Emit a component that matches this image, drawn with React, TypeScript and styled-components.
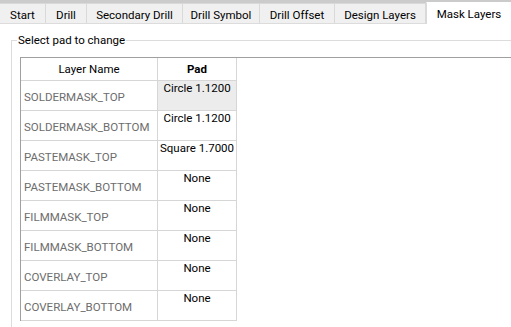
import React from "react";
import styled, { createGlobalStyle } from "styled-components";

const GlobalStyle = createGlobalStyle`
  html, body { margin: 0; padding: 0; background: #ffffff; }
  body {
    font-family: Roboto, "Noto Sans", sans-serif;
    font-size: 11.5px;
    color: #000000;
  }
`;

const Window = styled.div`
  width: 511px;
  height: 327px;
  overflow: hidden;
  background: #ffffff;
  display: flex;
  flex-direction: column;
`;

const TabStrip = styled.div`
  display: flex;
  align-items: flex-end;
  box-sizing: border-box;
  height: 24px;
  padding-top: 2px;
  background: #cbcbcb;
  flex-shrink: 0;
`;

const Tab = styled.div<{ $w: number; $active?: boolean }>`
  box-sizing: border-box;
  flex-shrink: 0;
  width: ${(p) => p.$w}px;
  height: ${(p) => (p.$active ? 22 : 21)}px;
  display: flex;
  align-items: center;
  justify-content: center;
  padding-top: ${(p) => (p.$active ? 1 : 3)}px;
  line-height: 16px;
  white-space: nowrap;
  background: ${(p) => (p.$active ? "#ffffff" : "#f0f0f0")};
  border-top: 1px solid ${(p) => (p.$active ? "#ffffff" : "#d9d9d9")};
  border-bottom: ${(p) => (p.$active ? "none" : "1px solid #dcdcdc")};
  border-left: ${(p) => (p.$active ? "1px solid #d9d9d9" : "none")};
  border-right: ${(p) => (p.$active ? "none" : "1px solid #d9d9d9")};
  flex-grow: ${(p) => (p.$active ? 1 : 0)};
`;

const Body = styled.div`
  flex: 1;
  display: flex;
  padding: 8px 0 0 11px;
`;

const Group = styled.fieldset`
  box-sizing: border-box;
  margin: 0;
  padding: 0 0 0 8px;
  width: 560px;
  min-height: 340px;
  border: 1px solid #dcdcdc;
  flex-shrink: 0;
  display: flex;
  flex-direction: column;
`;

const Legend = styled.legend`
  margin-left: -3px;
  padding: 0 1px;
  line-height: 16px;
  color: #000000;
`;

const GridFrame = styled.div`
  margin-top: 9px;
  flex: 1;
  border-top: 1px solid #a0a0a0;
  border-left: 1px solid #a0a0a0;
`;

const Grid = styled.div`
  display: grid;
  grid-template-columns: 137px 79px;
  grid-template-rows: 23px;
  grid-auto-rows: 30px;
`;

const Cell = styled.div`
  box-sizing: border-box;
  border-right: 1px solid #d6d6d6;
  border-bottom: 1px solid #d6d6d6;
  display: flex;
  white-space: nowrap;
  overflow: hidden;
`;

const HeadCell = styled(Cell)<{ $bold?: boolean }>`
  align-items: center;
  justify-content: center;
  line-height: 16px;
  font-weight: ${(p) => (p.$bold ? 700 : 400)};
  color: #000000;
`;

const NameCell = styled(Cell)`
  align-items: flex-start;
  padding: 8px 0 0 3px;
  line-height: 16px;
  color: #6d6d6d;
`;

const PadCell = styled(Cell)<{ $selected?: boolean }>`
  justify-content: center;
  align-items: flex-start;
  line-height: 15px;
  color: #000000;
  background: ${(p) => (p.$selected ? "#ececec" : "#ffffff")};
`;

const tabs = [
  { label: "Start", w: 46 },
  { label: "Drill", w: 41 },
  { label: "Secondary Drill", w: 96 },
  { label: "Drill Symbol", w: 77 },
  { label: "Drill Offset", w: 75 },
  { label: "Design Layers", w: 91 },
  { label: "Mask Layers", w: 85, active: true },
];

const rows = [
  { name: "SOLDERMASK_TOP", pad: "Circle 1.1200", selected: true },
  { name: "SOLDERMASK_BOTTOM", pad: "Circle 1.1200" },
  { name: "PASTEMASK_TOP", pad: "Square 1.7000" },
  { name: "PASTEMASK_BOTTOM", pad: "None" },
  { name: "FILMMASK_TOP", pad: "None" },
  { name: "FILMMASK_BOTTOM", pad: "None" },
  { name: "COVERLAY_TOP", pad: "None" },
  { name: "COVERLAY_BOTTOM", pad: "None" },
];

export default function App() {
  return (
    <>
      <GlobalStyle />
      <Window>
        <TabStrip>
          {tabs.map((t) => (
            <Tab key={t.label} $w={t.w} $active={t.active}>
              {t.label}
            </Tab>
          ))}
        </TabStrip>
        <Body>
          <Group>
            <Legend>Select pad to change</Legend>
            <GridFrame>
              <Grid>
                <HeadCell>Layer Name</HeadCell>
                <HeadCell $bold>Pad</HeadCell>
                {rows.map((r) => (
                  <React.Fragment key={r.name}>
                    <NameCell>{r.name}</NameCell>
                    <PadCell $selected={r.selected}>{r.pad}</PadCell>
                  </React.Fragment>
                ))}
              </Grid>
            </GridFrame>
          </Group>
        </Body>
      </Window>
    </>
  );
}
